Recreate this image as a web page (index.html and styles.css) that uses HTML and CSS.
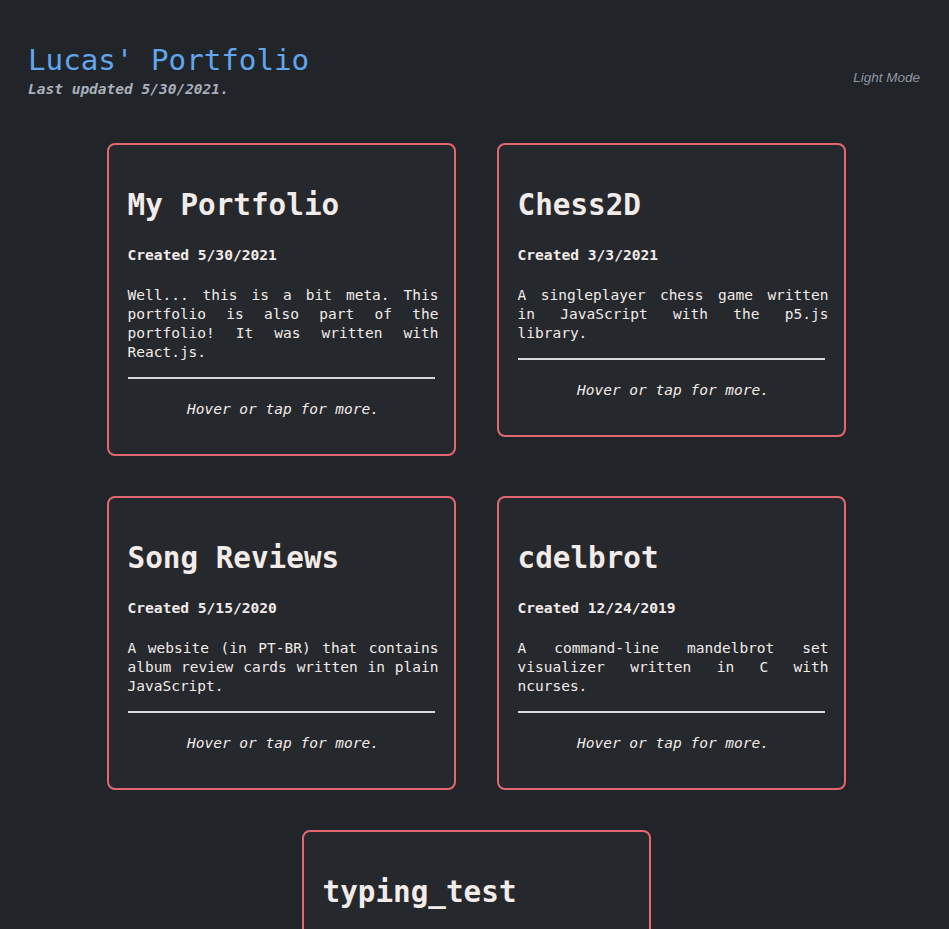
FILE: index.html
```html
<!DOCTYPE html>
<html>
<head>
<meta charset="utf-8">
<link rel="stylesheet" href="styles.css">
</head>
<body>
<header class="top">
  <div class="brand">
    <h1 class="site-title">Lucas' Portfolio</h1>
    <p class="updated">Last updated 5/30/2021.</p>
  </div>
  <a class="mode">Light Mode</a>
</header>
<main class="cards">
  <section class="card">
    <h2 class="card-title">My Portfolio</h2>
    <p class="created">Created 5/30/2021</p>
    <p class="desc">Well... this is a bit meta. This portfolio is also part of the portfolio! It was written with React.js.</p>
    <hr class="rule">
    <p class="hint">Hover or tap for more.</p>
  </section>
  <section class="card">
    <h2 class="card-title">Chess2D</h2>
    <p class="created">Created 3/3/2021</p>
    <p class="desc">A singleplayer chess game written in JavaScript with the p5.js library.</p>
    <hr class="rule">
    <p class="hint">Hover or tap for more.</p>
  </section>
  <section class="card">
    <h2 class="card-title">Song Reviews</h2>
    <p class="created">Created 5/15/2020</p>
    <p class="desc">A website (in PT-BR) that contains album review cards written in plain JavaScript.</p>
    <hr class="rule">
    <p class="hint">Hover or tap for more.</p>
  </section>
  <section class="card">
    <h2 class="card-title">cdelbrot</h2>
    <p class="created">Created 12/24/2019</p>
    <p class="desc">A command-line mandelbrot set visualizer written in C with ncurses.</p>
    <hr class="rule">
    <p class="hint">Hover or tap for more.</p>
  </section>
  <section class="card">
    <h2 class="card-title">typing_test</h2>
    <p class="created">Created 4/20/2019</p>
    <p class="desc">A simple typing speed test that runs in the terminal.</p>
    <hr class="rule">
    <p class="hint">Hover or tap for more.</p>
  </section>
</main>
</body>
</html>
```
FILE: styles.css
```css
html, body {
  margin: 0;
  background: #212429;
}
body {
  font-family: "DejaVu Sans Mono", monospace;
  color: #f3ebe8;
  padding: 0 28px;
}
.top {
  display: flex;
  justify-content: space-between;
  align-items: center;
  padding-top: 42px;
}
.site-title {
  margin: 0;
  font-size: 29.2px;
  font-weight: normal;
  color: #61a6ec;
  line-height: 36px;
}
.updated {
  margin: 2px 0 0;
  font-size: 14.5px;
  font-weight: bold;
  font-style: italic;
  color: #a9b0bb;
  line-height: 18px;
}
.mode {
  font-family: "Liberation Sans", Arial, sans-serif;
  font-style: italic;
  font-size: 13.5px;
  color: #8e98a6;
  margin: 14px 1px 0 0;
}
.cards {
  display: flex;
  flex-wrap: wrap;
  justify-content: center;
  align-items: flex-start;
  gap: 40px 41px;
  margin: 45px 0 0 3px;
  padding-bottom: 40px;
}
.card {
  box-sizing: border-box;
  width: 349px;
  background: #25282d;
  border: 2px solid #e2676f;
  border-radius: 8px;
  padding: 20px 15px 35px 19px;
}
.card-title {
  margin: 22px 0 22px;
  font-size: 29.3px;
  font-weight: bold;
  line-height: 36px;
}
.created {
  margin: 0 0 22px;
  font-size: 14.6px;
  font-weight: bold;
  line-height: 19px;
}
.desc {
  margin: 0;
  font-size: 14.5px;
  line-height: 19px;
  text-align: justify;
}
.rule {
  border: 0;
  border-top: 2px solid #d8d8d8;
  margin: 15px 4px 21px 0;
}
.hint {
  margin: 0;
  text-align: center;
  font-size: 14.5px;
  font-style: italic;
  line-height: 19px;
}
```
